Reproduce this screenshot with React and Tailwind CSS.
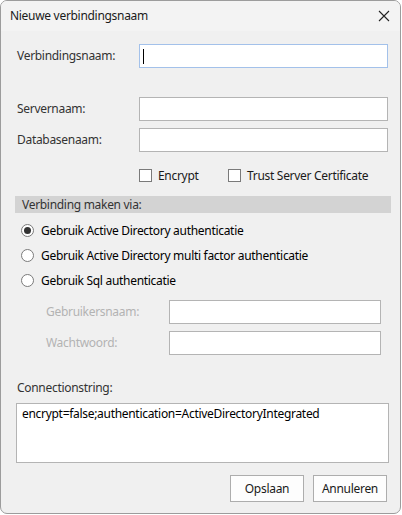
import React from "react";

const font = { fontFamily: '"Noto Sans", "Open Sans", sans-serif' };

function TextInput({ className = "", focused = false }) {
  return (
    <div
      className={`h-[24px] bg-white border ${focused ? "border-[#a3c1ea]" : "border-[#b4b4b4]"} flex items-center pl-[3px] ${className}`}
    >
      {focused && <div className="w-px h-[15px] bg-black" />}
    </div>
  );
}

function Checkbox({ label, className = "" }) {
  return (
    <div className={`flex items-center ${className}`}>
      <div className="w-[13px] h-[13px] bg-white border border-[#7a7a7a]" />
      <span className="ml-[6px] text-[#1a1a1a]">{label}</span>
    </div>
  );
}

function Radio({ label, checked = false }) {
  return (
    <div className="h-[25px] flex items-center pl-[5px]">
      <div className="w-[13px] h-[13px] rounded-full bg-white border border-[#7a7a7a] flex items-center justify-center">
        {checked && <div className="w-[7px] h-[7px] rounded-full bg-[#333]" />}
      </div>
      <span className="ml-[7px] text-black">{label}</span>
    </div>
  );
}

export default function App() {
  return (
    <div className="w-[402px] h-[515px] bg-white text-[12px] leading-[16px] tracking-[-0.3px]" style={font}>
      <div className="w-[401px] h-[514px] border border-[#9c9c9c] rounded-[7px] overflow-hidden bg-[#f0f0f0] flex flex-col">
        {/* titelbalk */}
        <div className="h-[30px] bg-[#f3f3f3] flex items-center justify-between pl-[9px] pr-[9px] shrink-0">
          <span className="text-[#1a1a1a]">Nieuwe verbindingsnaam</span>
          <svg width="12" height="12" viewBox="0 0 12 12" className="mr-[1px]">
            <path d="M1 1L11 11M11 1L1 11" stroke="#222" strokeWidth="1.1" />
          </svg>
        </div>

        <div className="flex flex-col pl-[15px] pr-[12px]">
          {/* Verbindingsnaam */}
          <div className="flex items-center mt-[13px]">
            <span className="w-[123px] pl-[1px] text-[#333]">Verbindingsnaam:</span>
            <TextInput focused className="w-[249px]" />
          </div>

          {/* Server / database */}
          <div className="flex items-center mt-[29px]">
            <span className="w-[123px] pl-[1px] text-[#333]">Servernaam:</span>
            <TextInput className="w-[249px]" />
          </div>
          <div className="flex items-center mt-[7px]">
            <span className="w-[123px] pl-[1px] text-[#333]">Databasenaam:</span>
            <TextInput className="w-[249px]" />
          </div>

          {/* opties */}
          <div className="flex items-center mt-[17px] pl-[123px] h-[13px]">
            <Checkbox label="Encrypt" className="w-[89px]" />
            <Checkbox label="Trust Server Certificate" />
          </div>

          {/* groep */}
          <div className="mt-[14px] h-[17px] bg-[#d3d3d3] flex items-center pl-[7px] w-[376px] -ml-px">
            <span className="text-[#333]">Verbinding maken via:</span>
          </div>

          <div className="flex flex-col mt-[5px]">
            <Radio label="Gebruik Active Directory authenticatie" checked />
            <Radio label="Gebruik Active Directory multi factor authenticatie" />
            <Radio label="Gebruik Sql authenticatie" />
          </div>

          <div className="flex items-center mt-[7px] pl-[30px]">
            <span className="w-[123px] text-[#b3b3b3]">Gebruikersnaam:</span>
            <TextInput className="w-[212px]" />
          </div>
          <div className="flex items-center mt-[7px] pl-[30px]">
            <span className="w-[123px] text-[#b3b3b3]">Wachtwoord:</span>
            <TextInput className="w-[212px]" />
          </div>

          {/* connectionstring */}
          <span className="mt-[25px] pl-[1px] text-[#333]">Connectionstring:</span>
          <div className="mt-[7px] h-[60px] w-[373px] bg-white border border-[#b4b4b4] px-[5px] pt-[2px] text-black">
            encrypt=false;authentication=ActiveDirectoryIntegrated
          </div>

          {/* knoppen */}
          <div className="flex justify-end gap-[9px] mt-[12px] pr-[1px]">
            <button className="w-[74px] h-[27px] bg-[#fdfdfd] border border-[#adadad] text-[#1a1a1a]">Opslaan</button>
            <button className="w-[74px] h-[27px] bg-[#fdfdfd] border border-[#adadad] text-[#1a1a1a]">Annuleren</button>
          </div>
        </div>
      </div>
    </div>
  );
}
